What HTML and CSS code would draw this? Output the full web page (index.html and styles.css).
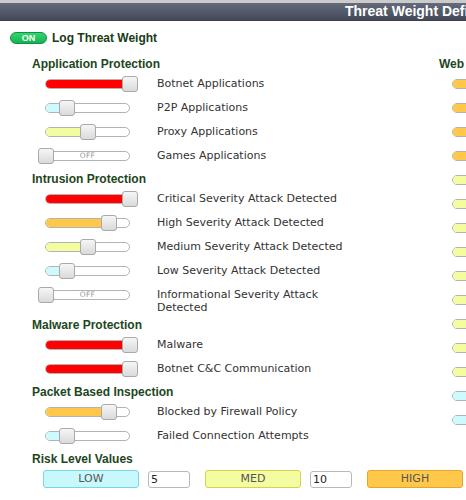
FILE: index.html
```html
<!DOCTYPE html>
<html>
<head>
<meta charset="utf-8">
<link rel="stylesheet" href="styles.css">
</head>
<body>
<div class="header"><span class="title">Threat Weight Definitions</span></div>
<div class="toggle-row"><span class="pill">ON</span><span class="toggle-label">Log Threat Weight</span></div>
<div class="columns">
  <div class="col">
    <div class="section">Application Protection</div>
    <div class="row"><div class="slider lv4"><div class="track"><div class="fill"></div></div><div class="thumb"></div></div><span class="label">Botnet Applications</span></div>
    <div class="row"><div class="slider lv1"><div class="track"><div class="fill"></div></div><div class="thumb"></div></div><span class="label">P2P Applications</span></div>
    <div class="row"><div class="slider lv2"><div class="track"><div class="fill"></div></div><div class="thumb"></div></div><span class="label">Proxy Applications</span></div>
    <div class="row"><div class="slider lv0"><div class="track"><span class="off">OFF</span></div><div class="thumb"></div></div><span class="label">Games Applications</span></div>

    <div class="section">Intrusion Protection</div>
    <div class="row"><div class="slider lv4"><div class="track"><div class="fill"></div></div><div class="thumb"></div></div><span class="label">Critical Severity Attack Detected</span></div>
    <div class="row"><div class="slider lv3"><div class="track"><div class="fill"></div></div><div class="thumb"></div></div><span class="label">High Severity Attack Detected</span></div>
    <div class="row"><div class="slider lv2"><div class="track"><div class="fill"></div></div><div class="thumb"></div></div><span class="label">Medium Severity Attack Detected</span></div>
    <div class="row"><div class="slider lv1"><div class="track"><div class="fill"></div></div><div class="thumb"></div></div><span class="label">Low Severity Attack Detected</span></div>
    <div class="row"><div class="slider lv0"><div class="track"><span class="off">OFF</span></div><div class="thumb"></div></div><span class="label">Informational Severity Attack Detected</span></div>

    <div class="section">Malware Protection</div>
    <div class="row"><div class="slider lv4"><div class="track"><div class="fill"></div></div><div class="thumb"></div></div><span class="label">Malware</span></div>
    <div class="row"><div class="slider lv4"><div class="track"><div class="fill"></div></div><div class="thumb"></div></div><span class="label">Botnet C&amp;C Communication</span></div>

    <div class="section">Packet Based Inspection</div>
    <div class="row"><div class="slider lv3"><div class="track"><div class="fill"></div></div><div class="thumb"></div></div><span class="label">Blocked by Firewall Policy</span></div>
    <div class="row"><div class="slider lv1"><div class="track"><div class="fill"></div></div><div class="thumb"></div></div><span class="label">Failed Connection Attempts</span></div>
  </div>

  <div class="col">
    <div class="section">Web</div>
    <div class="row"><div class="slider lv3"><div class="track"><div class="fill"></div></div></div></div>
    <div class="row"><div class="slider lv3"><div class="track"><div class="fill"></div></div></div></div>
    <div class="row"><div class="slider lv3"><div class="track"><div class="fill"></div></div></div></div>
    <div class="row"><div class="slider lv3"><div class="track"><div class="fill"></div></div></div></div>
    <div class="row"><div class="slider lv2"><div class="track"><div class="fill"></div></div></div></div>
    <div class="row"><div class="slider lv2"><div class="track"><div class="fill"></div></div></div></div>
    <div class="row"><div class="slider lv2"><div class="track"><div class="fill"></div></div></div></div>
    <div class="row"><div class="slider lv2"><div class="track"><div class="fill"></div></div></div></div>
    <div class="row"><div class="slider lv2"><div class="track"><div class="fill"></div></div></div></div>
    <div class="row"><div class="slider lv2"><div class="track"><div class="fill"></div></div></div></div>
    <div class="row"><div class="slider lv2"><div class="track"><div class="fill"></div></div></div></div>
    <div class="row"><div class="slider lv2"><div class="track"><div class="fill"></div></div></div></div>
    <div class="row"><div class="slider lv2"><div class="track"><div class="fill"></div></div></div></div>
    <div class="row"><div class="slider lv1"><div class="track"><div class="fill"></div></div></div></div>
    <div class="row"><div class="slider lv1"><div class="track"><div class="fill"></div></div></div></div>
  </div>
</div>

<div class="risk">
  <div class="section">Risk Level Values</div>
  <div class="risk-row">
    <div class="pair"><span class="level low">LOW</span><span class="value">5</span></div>
    <div class="pair"><span class="level med">MED</span><span class="value">10</span></div>
    <div class="pair"><span class="level high">HIGH</span></div>
  </div>
</div>
</body>
</html>
```
FILE: styles.css
```css
html, body {
  margin: 0;
  padding: 0;
  overflow: hidden;
  background: #ffffff;
}

body {
  width: 466px;
  height: 500px;
  font-family: "DejaVu Sans", Verdana, sans-serif;
}

.header {
  height: 17px;
  border-top: 3px solid #cbcbcb;
  border-bottom: 1px solid #3b404c;
  background: linear-gradient(#646b7b, #434958);
  white-space: nowrap;
  overflow: hidden;
}

.title {
  display: block;
  padding-left: 345px;
  font-family: "Liberation Sans", Arial, sans-serif;
  font-weight: bold;
  font-size: 14px;
  line-height: 17px;
  color: #ffffff;
}

.toggle-row {
  display: flex;
  align-items: center;
  height: 16px;
  margin-top: 9px;
  padding-left: 10px;
}

.pill {
  box-sizing: border-box;
  width: 37px;
  height: 12px;
  border-radius: 6px;
  border: 1px solid #109043;
  background: linear-gradient(#34d473, #14b34f);
  color: #ffffff;
  font-family: "Liberation Sans", Arial, sans-serif;
  font-weight: bold;
  font-size: 9px;
  line-height: 10px;
  text-align: center;
}

.toggle-label {
  margin-left: 5px;
  font-family: "Liberation Sans", Arial, sans-serif;
  font-weight: bold;
  font-size: 12px;
  color: #173c17;
}

.columns {
  display: grid;
  grid-template-columns: 407px 407px;
  padding-left: 32px;
  margin-top: 7px;
  width: 900px;
}

.section {
  margin-top: 3px;
  height: 16px;
  line-height: 16px;
  font-family: "Liberation Sans", Arial, sans-serif;
  font-weight: bold;
  font-size: 12px;
  color: #1c461e;
  white-space: nowrap;
}

.row {
  display: flex;
  align-items: flex-start;
  min-height: 24px;
}

.slider {
  position: relative;
  flex: none;
  width: 100px;
  height: 24px;
  margin-left: 6px;
  display: flex;
  align-items: center;
}

.track {
  position: relative;
  box-sizing: border-box;
  margin-left: 7px;
  width: 85px;
  height: 10px;
  border: 1px solid #b3b3b3;
  border-radius: 5px;
  background: #ffffff;
  overflow: hidden;
  display: flex;
  align-items: center;
  justify-content: center;
}

.fill {
  position: absolute;
  left: 0;
  top: 0;
  bottom: 0;
}

.off {
  font-size: 7.5px;
  line-height: 8px;
  color: #9a9a9a;
  letter-spacing: 0.3px;
}

.thumb {
  position: absolute;
  top: 4px;
  left: 0;
  box-sizing: border-box;
  width: 16px;
  height: 16px;
  border: 1px solid #a9a9a9;
  border-radius: 3px;
  background: linear-gradient(#f6f6f6, #dadada);
}

.lv1 .fill { width: 21px; background: #ccfafd; }
.lv1 .thumb { left: 21px; }
.lv2 .fill { width: 42px; background: #f4fca2; }
.lv2 .thumb { left: 42px; }
.lv3 .fill { width: 63px; background: #ffc84b; }
.lv3 .thumb { left: 63px; }
.lv4 .fill { width: 100%; background: #ff0000; }
.lv4 .thumb { left: 84px; }

.label {
  flex: none;
  width: 205px;
  margin-left: 19px;
  padding-top: 5px;
  font-size: 11px;
  line-height: 13px;
  color: #333333;
}

.risk {
  padding-left: 32px;
}

.risk-row {
  display: flex;
  gap: 15px;
  margin-top: 3px;
  padding-left: 11px;
}

.pair {
  display: flex;
  gap: 9px;
}

.level {
  box-sizing: border-box;
  width: 96px;
  height: 18px;
  border-radius: 3px;
  border: 1px solid;
  font-size: 11px;
  line-height: 16px;
  text-align: center;
  color: #555555;
}

.low { background: #c9f8fc; border-color: #78d6e6; }
.med { background: #f4fca2; border-color: #d6d24e; }
.high { background: #ffc84b; border-color: #e4a62a; }

.value {
  box-sizing: border-box;
  width: 42px;
  height: 17px;
  margin-top: 1px;
  border: 1px solid #b9b9b9;
  border-radius: 3px;
  padding-left: 2px;
  font-size: 11px;
  line-height: 15px;
  color: #222222;
  background: #ffffff;
}
```
